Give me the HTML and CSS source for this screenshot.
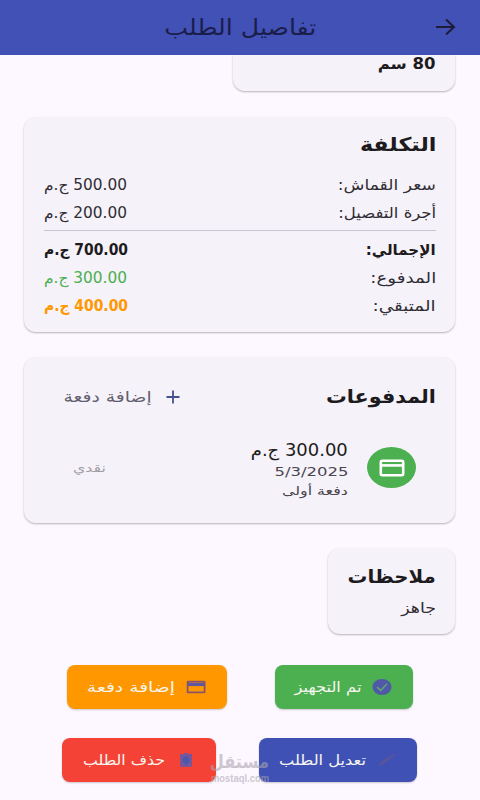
FILE: index.html
```html
<!DOCTYPE html>
<html lang="ar" dir="rtl">
<head>
<meta charset="utf-8">
<title>تفاصيل الطلب</title>
<link rel="stylesheet" href="styles.css">
</head>
<body>
<header class="bar">
  <svg class="back" viewBox="0 0 20 18"><path d="M0 9H18M10 1.5L18 9L10 16.5"/></svg>
  <h1><span class="t title">تفاصيل الطلب</span></h1>
</header>
<main>
  <section class="card size"><span class="t strong w-size">80 سم</span></section>

  <section class="card cost">
    <h2><span class="t w-cost">التكلفة</span></h2>
    <div class="row"><span class="t w-fabric">سعر القماش:</span><span class="t amount">500.00 ج.م</span></div>
    <div class="row"><span class="t w-labor">أجرة التفصيل:</span><span class="t amount">200.00 ج.م</span></div>
    <hr>
    <div class="row strong"><span class="t w-total">الإجمالي:</span><span class="t amount-b">700.00 ج.م</span></div>
    <div class="row"><span class="t w-paid">المدفوع:</span><span class="t amount green">300.00 ج.م</span></div>
    <div class="row"><span class="t w-left">المتبقي:</span><span class="t amount-b strong orange">400.00 ج.م</span></div>
  </section>

  <section class="card payments">
    <div class="head">
      <h2><span class="t w-pay">المدفوعات</span></h2>
      <div class="add"><svg class="plus" viewBox="0 0 14 14"><path d="M7 0.5V13.5M0.5 7H13.5"/></svg><span class="t w-add">إضافة دفعة</span></div>
    </div>
    <div class="item">
      <div class="avatar"><svg viewBox="0 0 26 20"><rect x="1.8" y="2.8" width="22.4" height="14.4" rx="1.4"/><path d="M1 7.4H25"/></svg></div>
      <div class="info">
        <span class="t sum">300.00 ج.م</span>
        <span class="t date">5/3/2025</span>
        <span class="t first">دفعة أولى</span>
      </div>
      <span class="t cash">نقدي</span>
    </div>
  </section>

  <section class="card notes">
    <h2><span class="t w-notes">ملاحظات</span></h2>
    <span class="t w-ready">جاهز</span>
  </section>

  <div class="actions first-row">
    <button class="btn done"><svg viewBox="0 0 20 18"><ellipse cx="10" cy="9" rx="9.5" ry="8" fill="#5059a8"/><path d="M5 9L8.7 12.4L15 5.8" stroke="#62a574" stroke-width="1.5" fill="none"/></svg><span class="t w-done">تم التجهيز</span></button>
    <button class="btn pay"><svg viewBox="0 0 20 18"><rect x="1.6" y="3.6" width="17" height="10.8" rx="0.4" stroke="#8c5268" stroke-width="1.8" fill="none"/><path d="M2 6.4H18.4" stroke="#6156a0" stroke-width="3.4"/></svg><span class="t w-btnadd">إضافة دفعة</span></button>
  </div>
  <div class="actions second-row">
    <button class="btn edit"><svg viewBox="0 0 20 18"><path d="M2 15L3 11.8L13.5 4L16 6L5.5 14Z" fill="#57549e"/><path d="M14.5 3.5L16.5 2.2L18.5 4L17 5.4Z" fill="#57549e"/></svg><span class="t w-edit">تعديل الطلب</span></button>
    <button class="btn del"><svg viewBox="0 0 20 18"><path d="M4 3H7.5L8.5 2H11.5L12.5 3H16V14Q16 16 14 16H6Q4 16 4 14Z" fill="#78569a"/><path d="M10 5V14M6.5 9H13.5M7.5 6.5L12.5 11.5M12.5 6.5L7.5 11.5" stroke="#4858ae" stroke-width="2"/></svg><span class="t w-del">حذف الطلب</span></button>
  </div>
</main>
<div class="watermark"><span class="t wm-ar">مستقل</span><span class="t wm-en">mostaql.com</span></div>
</body>
</html>
```
FILE: styles.css
```css
* { box-sizing: border-box; }
body {
  margin: 0;
  width: 480px;
  height: 800px;
  overflow: hidden;
  position: relative;
  background: #fdf7ff;
  color: #1d1b20;
  font: 15px/28px "DejaVu Sans", sans-serif;
}
h1, h2 { margin: 0; }

/* Wide lettering: each label is stretched from its leading edge. */
.t { display: inline-block; white-space: nowrap; transform-origin: right; }
.title { transform: scaleX(1.146); transform-origin: center; }
.w-size { transform: scaleX(1.102); }
.w-cost { transform: scaleX(1.17); }
.w-fabric { transform: scaleX(1.142); }
.w-labor { transform: scaleX(1.099); }
.w-total { transform: scaleX(1.005); }
.w-paid { transform: scaleX(1.217); }
.w-left { transform: scaleX(1.221); }
.w-pay { transform: scaleX(1.09); }
.w-add { transform: scaleX(1.247); }
.w-notes { transform: scaleX(1.04); }
.w-ready { transform: scaleX(1.24); }
.w-done { transform: scaleX(1.166); }
.w-btnadd { transform: scaleX(1.336); }
.w-edit { transform: scaleX(1.16); }
.w-del { transform: scaleX(1.123); }
.amount { transform: scaleX(1.024); transform-origin: left; }
.amount-b { transform: scaleX(.927); transform-origin: left; }

.bar { height: 55px; background: #4151b5; position: relative; display: flex; align-items: center; justify-content: center; }
.bar h1 { font-size: 22px; font-weight: 400; color: #1b1d4b; }
.back { position: absolute; right: 24px; top: 18px; width: 20px; height: 18px; fill: none; stroke: #1d1c3a; stroke-width: 2; }

main { padding: 0 25px 0 24px; }
.card { background: #f6f2f9; border-radius: 12px; box-shadow: 0 1px 2px rgba(0,0,0,.28); padding: 0 19px 0 20px; }
.size { width: 222px; height: 36px; border-radius: 0 0 12px 12px; line-height: 18px; }
.strong { font-weight: 700; }
h2 { font-size: 19px; font-weight: 700; }

.cost { margin-top: 26px; height: 215px; padding-top: 12px; }
.cost h2 { height: 42px; line-height: 30px; }
.row { display: flex; justify-content: space-between; height: 28px; color: #302d34; }
.row.strong { color: #1d1b20; }
hr { border: 0; border-top: 1px solid #cbc6cf; margin: 3px 0 5px; }
.row .green { color: #4caf50; }
.row .orange { color: #ff9800; }

.payments { margin-top: 25px; height: 166px; padding-top: 25px; }
.head { display: flex; justify-content: space-between; height: 48px; }
.add { display: flex; width: 136px; gap: 21px; color: #625f70; padding-top: 1px; }
.plus { width: 14px; height: 14px; margin-top: 7px; flex: none; fill: none; stroke: #46508f; stroke-width: 1.8; }
.add .t { margin-right: -7px; }
.item { display: flex; padding-right: 20px; }
.avatar { width: 49px; height: 41px; margin-top: 17px; border-radius: 50%; background: #4caf50; display: grid; place-items: center; }
.avatar svg { width: 26px; height: 20px; fill: none; stroke: #fff; stroke-width: 2.6; }
.info { display: flex; flex-direction: column; align-items: flex-start; margin: 9px 19px 0 0; width: 110px; line-height: 20px; font-size: 13px; color: #49454f; }
.sum { font-size: 17px; line-height: 23px; color: #1d1b20; transform: scaleX(1.057); }
.date { transform: scaleX(1.267); }
.first { font-size: 12px; line-height: 19px; transform: scaleX(1.322); }
.cash { margin: 26px auto 0 29px; font-size: 12px; line-height: 24px; color: #a29ea6; transform: scaleX(1.314); transform-origin: left; }

.notes { margin-top: 25px; width: 127px; height: 86px; padding-top: 14px; }
.notes h2 { height: 32px; }
.notes > .t { font-size: 14px; color: #302d34; }

.actions { display: flex; }
.first-row { margin-top: 31px; padding-right: 42px; gap: 48px; }
.second-row { margin-top: 29px; padding-right: 38px; gap: 43px; }
.btn { border: 0; border-radius: 8px; height: 44px; padding: 0 20px 0 0; display: flex; align-items: center; gap: 11px; color: #f6f6f0; font: 14px/28px "DejaVu Sans", sans-serif; box-shadow: 0 1px 2px rgba(0,0,0,.2); }
.btn svg { width: 20px; height: 18px; flex: none; }
.first-row .btn { padding-right: 21px; }
.done { width: 138px; background: #4caf50; }
.pay { width: 160px; background: #ff9800; }
.edit { width: 158px; background: #4051b5; }
.del { width: 154px; background: #f44336; }

.watermark { position: absolute; left: 211px; top: 751px; width: 58px; color: rgba(170,165,175,.6); }
.watermark .t { display: block; width: 58px; }
.wm-ar { font-size: 18px; font-weight: 700; line-height: 22px; height: 22px; transform: scaleX(.9); }
.wm-en { font: 700 10px/12px "Liberation Sans", sans-serif; transform: scaleX(.94); }
```
